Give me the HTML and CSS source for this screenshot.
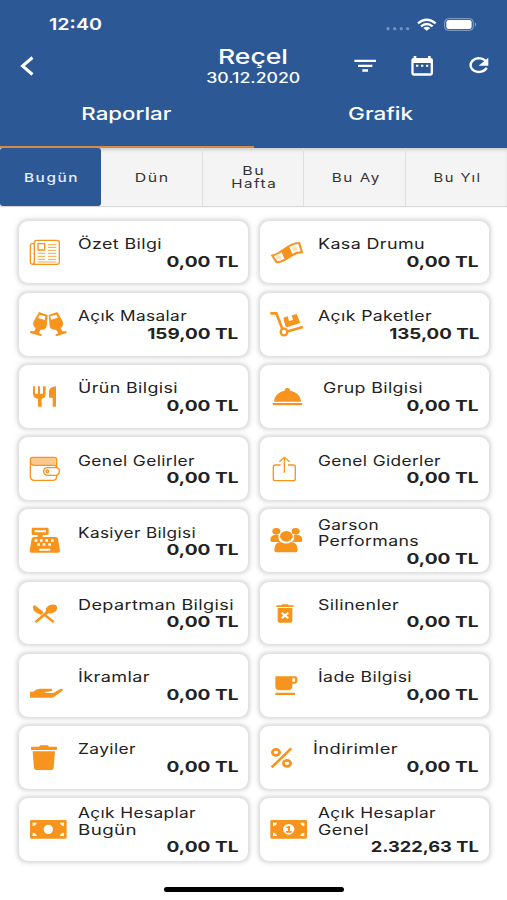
FILE: index.html
```html
<!DOCTYPE html>
<html lang="tr">
<head>
<meta charset="utf-8">
<title>Raporlar</title>
<link rel="stylesheet" href="styles.css">
</head>
<body>
<header class="header">
  <div class="status">
    <span class="time"><span class="fit" data-w="53">12:40</span></span>
    <svg class="status-icons" viewBox="400 48 280 50">
      <g fill="#7391c0"><circle cx="406" cy="86" r="5"/><circle cx="426" cy="86" r="5"/><circle cx="446" cy="86" r="5"/><circle cx="465" cy="86" r="5"/></g>
      <g fill="none" stroke="#fff" stroke-width="7"><path d="M496 70Q522 48 549 70M505 79Q522 65 540 79"/></g>
      <path d="M512 84Q522 76 533 84L522 92Z" fill="#fff"/>
      <rect x="576" y="56" width="86" height="35" rx="11" fill="none" stroke="#8da7cf" stroke-width="3"/>
      <rect x="581" y="60" width="76" height="27" rx="7" fill="#fff"/>
      <path d="M667 67q7 6 0 13z" fill="#8da7cf"/>
    </svg>
  </div>
  <div class="bar">
    <svg class="back" viewBox="0 0 14 20"><path d="M12.5 1.5L2.5 10l10 8.5"/></svg>
    <div class="heading">
      <h1><span class="fit" data-w="70">Reçel</span></h1>
      <p><span class="fit" data-w="94">30.12.2020</span></p>
    </div>
    <svg class="actions" viewBox="300 160 412 75">
      <g fill="#fff"><path d="M304 180h65v7h-65zM315 195h43v7h-43zM328 209h17v7h-17z"/>
      <path fill-rule="evenodd" d="M482 169h8v6h35v-6h8v6q7 0 7 7v39q0 7-7 7h-51q-7 0-7-7v-39q0-7 7-7zM482 190v31h51v-31z"/>
      <path d="M489 195h7v6h-7zM504 195h7v6h-7zM519 195h7v6h-7zM706 174v24h-29z"/></g>
      <path d="M700 187A25 20.500 0 1 0 701 204" fill="none" stroke="#fff" stroke-width="7"/>
    </svg>
  </div>
  <nav class="tabs">
    <a class="tab current"><span class="fit" data-w="90">Raporlar</span></a>
    <a class="tab"><span class="fit" data-w="65">Grafik</span></a>
  </nav>
</header>
<nav class="periods">
  <a class="period active"><span class="fit" data-w="55">Bugün</span></a>
  <a class="period"><span class="fit" data-w="35">Dün</span></a>
  <a class="period"><span class="fit" data-w="23">Bu</span><span class="fit" data-w="46">Hafta</span></a>
  <a class="period"><span class="fit" data-w="49">Bu Ay</span></a>
  <a class="period"><span class="fit" data-w="48">Bu Yıl</span></a>
</nav>
<main class="cards">
  <section class="card">
    <svg class="icon" viewBox="57 47 177 188"><g class="line"><path d="M103 115h-6q-6 0-6 6v48q0 8 8 8h72q7 0 7-7v-58q0-7-7-7h-61q-7 0-7 7v57q0 8-6 8"/><path d="M114 115h20v19h-20z"/><path d="M144 118h25M144 126h25M144 135h25M113 144h22M144 144h25M113 153h22M144 153h25M113 162h22M144 162h25M113 170h56" stroke-width="2.500"/></g></svg>
    <div class="text"><span class="label"><span class="fit" data-w="84">Özet Bilgi</span></span><span class="value"><span class="fit" data-w="72">0,00 TL</span></span></div>
  </section>
  <section class="card">
    <svg class="icon" viewBox="20 47 177 188"><path d="M52 149C82 145 104 109 140 110L150 144C118 141 99 175 68 174Z"/><path class="cut" d="M61 152q15-4 24-11l8 19q-10 7-21 8zM108 125q15-9 27-9l7 22q-13 0-25 7z"/><path d="M67 151l13-3 5 11-12 4zM115 127l13-5 5 12-13 4z" opacity=".3"/></svg>
    <div class="text"><span class="label"><span class="fit" data-w="107">Kasa Drumu</span></span><span class="value"><span class="fit" data-w="72">0,00 TL</span></span></div>
  </section>
  <section class="card">
    <svg class="icon" viewBox="57 264 177 188"><path d="M117 321l26 9-3 33q-3 13-19 11l-4 10 9 5-2 5-34-10 1-6 12 1 4-10q-12-9-5-22zM172 321l-26 9 3 33q3 13 19 11l7 10-9 5 2 5 32-10-1-5-12 0-5-10q12-9 5-22z"/><path class="cut" d="M119 329l17 5-2 11-20-6zM170 329l-19 5 2 10 20-6z"/></svg>
    <div class="text"><span class="label"><span class="fit" data-w="109">Açık Masalar</span></span><span class="value"><span class="fit" data-w="91">159,00 TL</span></span></div>
  </section>
  <section class="card">
    <svg class="icon" viewBox="20 264 177 188"><g fill="none" stroke="#f7941d" stroke-width="8"><path d="M51 325h18l18 46M104 379l45-13"/><circle cx="92" cy="381" r="10" stroke-width="7"/></g><path d="M90 338l13-4 4 14 12-3-4-14 15-4 11 27-38 12q-5 1-7-4z"/></svg>
    <div class="text"><span class="label"><span class="fit" data-w="114">Açık Paketler</span></span><span class="value"><span class="fit" data-w="90">135,00 TL</span></span></div>
  </section>
  <section class="card">
    <svg class="icon" viewBox="57 15 177 188"><path d="M99 79h6v22h9V79h6v22h9V79h8v22q0 13-12 15v24h-11v-24q-15-2-15-15zM168 79v61h-10v-27h-11V94q1-14 21-15z"/></svg>
    <div class="text"><span class="label"><span class="fit" data-w="100">Ürün Bilgisi</span></span><span class="value"><span class="fit" data-w="72">0,00 TL</span></span></div>
  </section>
  <section class="card indent">
    <svg class="icon" viewBox="20 15 177 188"><path d="M58 129h89v3q0 4-5 4H63q-5 0-5-4zM62 125c2-19 15-30 32-33q-1-8 8-8t8 8c18 3 32 14 33 33z"/></svg>
    <div class="text"><span class="label"><span class="fit" data-w="100">Grup Bilgisi</span></span><span class="value"><span class="fit" data-w="72">0,00 TL</span></span></div>
  </section>
  <section class="card">
    <svg class="icon" viewBox="57 232 177 188"><path d="M93 294h74v22H93z" opacity=".5"/><g class="line"><path d="M170 324v-23q0-8-8-8H99q-8 0-8 8v48q0 13 12 13h56q11 0 11-14M91 305q0 12 12 12h59q8 0 8 7h-28q-11 0-11 11t11 12h25q11-1 11-12t-8-11"/><circle cx="142" cy="335" r="4"/></g></svg>
    <div class="text"><span class="label"><span class="fit" data-w="117">Genel Gelirler</span></span><span class="value"><span class="fit" data-w="72">0,00 TL</span></span></div>
  </section>
  <section class="card">
    <svg class="icon" viewBox="20 232 177 188"><g class="line"><path d="M82 316H66q-6 0-6 6v35q0 6 6 6h54q6 0 6-6v-35q0-6-6-6h-16M93 339v-45M78 306l15-13 16 13"/></g></svg>
    <div class="text"><span class="label"><span class="fit" data-w="123">Genel Giderler</span></span><span class="value"><span class="fit" data-w="72">0,00 TL</span></span></div>
  </section>
  <section class="card">
    <svg class="icon" viewBox="57 17 177 188"><path fill-rule="evenodd" d="M99 73h43q4 0 4 4v14q0 4-4 4h-14v6h39q6 0 7 5l6 36q0 6-6 6H95q-6 0-6-6l6-36q1-5 7-5h11v-6H99q-4 0-4-4V77q0-4 4-4zM104 81v6h34v-6z"/><path class="cut" d="M104 108h8v7h-8zM120 108h8v7h-8zM136 108h8v7h-8zM153 108h8v7h-8zM112 120h8v7h-8zM128 120h8v7h-8zM145 120h8v7h-8zM118 136h33v6h-33z"/></svg>
    <div class="text"><span class="label"><span class="fit" data-w="118">Kasiyer Bilgisi</span></span><span class="value"><span class="fit" data-w="72">0,00 TL</span></span></div>
  </section>
  <section class="card">
    <svg class="icon" viewBox="20 17 177 188"><ellipse cx="69" cy="84" rx="12" ry="10"/><ellipse cx="127" cy="84" rx="12" ry="10"/><path d="M51 110q0-15 16-15h9q-3 14 6 21H56q-5 0-5-6zM147 110q0-15-16-15h-9q3 14-6 21h26q5 0 5-6zM63 139q0-22 20-23 15 9 30 0 20 1 20 23 0 8-8 8H71q-8 0-8-8z"/><ellipse cx="99" cy="99" rx="19" ry="16"/></svg>
    <div class="text"><span class="label"><span class="fit" data-w="61">Garson</span></span><span class="label"><span class="fit" data-w="101">Performans</span></span><span class="value"><span class="fit" data-w="72">0,00 TL</span></span></div>
  </section>
  <section class="card">
    <svg class="icon" viewBox="57 233 177 188"><path d="M104 302l27 22-8 8q-25-10-24-22 0-6 5-8zM104 351l34-30q-3-11 10-18 10-5 19-1 7 5 3 14-7 13-25 11l-36 29zM138 330l26 21-5 5-27-21z"/></svg>
    <div class="text"><span class="label"><span class="fit" data-w="156">Departman Bilgisi</span></span><span class="value"><span class="fit" data-w="72">0,00 TL</span></span></div>
  </section>
  <section class="card">
    <svg class="icon" viewBox="20 233 177 188"><path d="M69 303h14l4-3h16l4 3h14v5H69zM73 311h44v38q0 6-6 6H79q-6 0-6-6z"/><path d="M85 325l20 17m0-17l-20 17" stroke="#fff" stroke-width="6"/></svg>
    <div class="text"><span class="label"><span class="fit" data-w="81">Silinenler</span></span><span class="value"><span class="fit" data-w="72">0,00 TL</span></span></div>
  </section>
  <section class="card">
    <svg class="icon" viewBox="57 17 177 188"><path d="M90 130h10q8-9 20-9h34q5 2 2 7l-20 3v3h24l21-12q8-3 8 2 0 2-3 4l-24 18q-4 2-8 2H90z"/></svg>
    <div class="text"><span class="label"><span class="fit" data-w="72">İkramlar</span></span><span class="value"><span class="fit" data-w="72">0,00 TL</span></span></div>
  </section>
  <section class="card">
    <svg class="icon" viewBox="20 17 177 188"><path fill-rule="evenodd" d="M66 84h60q6 0 6 6v9q0 7-7 7h-8v7q0 13-13 13H79q-13 0-13-13zM117 90v10h8V90zM66 133h59v7H66z"/></svg>
    <div class="text"><span class="label"><span class="fit" data-w="94">İade Bilgisi</span></span><span class="value"><span class="fit" data-w="72">0,00 TL</span></span></div>
  </section>
  <section class="card">
    <svg class="icon" viewBox="57 234 177 188"><path d="M93 298q0-2 3-2h21l4-4h22l4 4h21q3 0 3 2v6q0 2-3 2H96q-3 0-3-2zM98 310h67l-4 50q-1 6-7 6h-45q-6 0-7-6z"/></svg>
    <div class="text"><span class="label"><span class="fit" data-w="58">Zayiler</span></span><span class="value"><span class="fit" data-w="72">0,00 TL</span></span></div>
  </section>
  <section class="card outdent">
    <svg class="icon" viewBox="20 234 177 188"><g fill="none" stroke="#f7941d" stroke-width="8"><ellipse cx="68" cy="313" rx="11" ry="9"/><ellipse cx="101" cy="346" rx="11" ry="9"/><path d="M114 301l-59 57"/></g></svg>
    <div class="text"><span class="label"><span class="fit" data-w="85">İndirimler</span></span><span class="value"><span class="fit" data-w="72">0,00 TL</span></span></div>
  </section>
  <section class="card">
    <svg class="icon" viewBox="57 451 177 188"><rect x="90" y="517" width="110" height="56" rx="4"/><circle class="cut" cx="145" cy="545" r="14"/><path class="cut" d="M98 525h12q-1 9-12 10zM192 525h-12q1 9 12 10zM98 565h12q-1-9-12-10zM192 565h-12q1-9 12-10z"/></svg>
    <div class="text"><span class="label"><span class="fit" data-w="118">Açık Hesaplar</span></span><span class="label"><span class="fit" data-w="59">Bugün</span></span><span class="value"><span class="fit" data-w="72">0,00 TL</span></span></div>
  </section>
  <section class="card">
    <svg class="icon" viewBox="20 451 177 188"><rect x="51" y="517" width="110" height="56" rx="4"/><ellipse class="cut" cx="106" cy="545" rx="17" ry="16"/><path class="cut" d="M59 525h12q-1 9-12 10zM153 525h-12q1 9 12 10zM59 565h12q-1-9-12-10zM153 565h-12q1-9 12-10z"/><path d="M99 538l6-3h5v15h5v5H98v-5h6v-9h-5z"/></svg>
    <div class="text"><span class="label"><span class="fit" data-w="118">Açık Hesaplar</span></span><span class="label"><span class="fit" data-w="51">Genel</span></span><span class="value"><span class="fit" data-w="108">2.322,63 TL</span></span></div>
  </section>
</main>
<footer class="home"></footer>
<script src="fit.js"></script>
</body>
</html>
```
FILE: styles.css
```css
* { box-sizing: border-box; }
body {
  margin: 0;
  height: 900px;
  overflow: hidden;
  display: flex;
  flex-direction: column;
  background: #fff;
  color: #222;
  font-family: Inter, "Liberation Sans", sans-serif;
}
svg { display: block; }
.fit { display: inline-block; white-space: nowrap; transform-origin: center; }

.header {
  height: 147.500px;
  flex: none;
  display: flex;
  flex-direction: column;
  background: #2c5896;
  color: #fff;
}
.status {
  height: 40px;
  padding: 8px 28px 0 48.5px;
  display: flex;
  justify-content: space-between;
}
.time { font-size: 16.5px; font-weight: 600; line-height: 32px; }
.time .fit { transform-origin: left; }
.status-icons { width: 93.300px; height: 16.700px; margin-top: 8px; }
.bar {
  height: 50px;
  padding: 0 16.700px 0 20px;
  display: grid;
  grid-template-columns: 133px 1fr 137.300px;
}
.back { width: 14px; height: 20px; margin-top: 16px; fill: none; stroke: #fff; stroke-width: 3; }
.heading { text-align: center; padding-top: 4.500px; width: 200px; justify-self: center; }
.heading h1 { margin: 0; font-size: 20.5px; font-weight: 500; line-height: 23.500px; }
.heading p { margin: 0; font-size: 14px; font-weight: 500; line-height: 19px; }
.actions { width: 137.300px; height: 25px; margin-top: 13.300px; }
.tabs { flex: 1; display: flex; }
.tab {
  flex: 1;
  text-align: center;
  font-size: 17px;
  font-weight: 500;
  line-height: 48px;
  border-bottom: 2px solid transparent;
}
.tab.current { border-bottom-color: #d58b45; }

.periods {
  height: 58.500px;
  flex: none;
  display: flex;
  background: #f4f4f4;
  box-shadow: 0 1px 1px #d8d8d8, inset 0 3px 4px -2px #bbb;
}
.period {
  flex: 1;
  display: flex;
  flex-direction: column;
  align-items: center;
  justify-content: center;
  font-size: 12px;
  line-height: 13.5px;
  letter-spacing: 1.200px;
  color: #333;
  padding: 1px 0 0 2px;
  border-right: 1px solid #e0e0e0;
}
.period:last-child { border-right: 0; }
.period.active {
  background: #2c5896;
  color: #e8eefa;
  border-radius: 3px;
  border-right: 0;
  font-weight: 500;
}

.cards {
  display: grid;
  grid-template-columns: 229px 229px;
  grid-auto-rows: 62.700px;
  gap: 9.500px 11.500px;
  padding: 14.700px 0 0 19.300px;
}
.card {
  display: grid;
  grid-template-columns: 59px 1fr;
  background: #fff;
  border-radius: 9px;
  box-shadow: 0 0 3px 1.500px #dedede, 0 0 5px 4px #f5f5f5;
}
.icon { width: 59px; height: 62.700px; fill: #f7941d; }
.icon .cut { fill: #fff; }
.icon .line { fill: none; stroke: #f7941d; stroke-width: 4; }
.text {
  display: flex;
  flex-direction: column;
  justify-content: center;
  padding: 2.500px 10px 0 0;
}
.label { font-size: 14px; line-height: 16.500px; height: 16.500px; letter-spacing: .3px; }
.label .fit { transform-origin: left; margin-left: -.5px; }
.value { font-size: 15px; font-weight: 700; line-height: 18px; height: 18px; text-align: right; }
.value .fit { transform-origin: right; }
.indent .label { padding-left: 5px; }
.outdent .label { margin-left: -5.500px; }

.home {
  width: 180px;
  height: 5px;
  margin: 26px auto 0;
  border-radius: 3px;
  background: #000;
}
```
FILE: fit.js
```js
// Stretch each text run to its wide-set width.
document.querySelectorAll(".fit").forEach(function (el) {
  el.style.transform = "scaleX(" + el.dataset.w / el.getBoundingClientRect().width + ")";
});
```
